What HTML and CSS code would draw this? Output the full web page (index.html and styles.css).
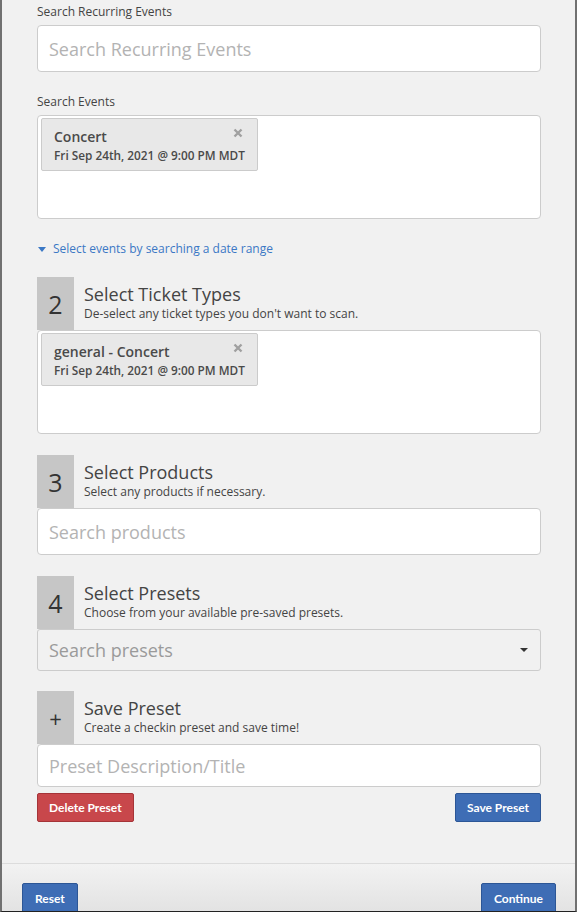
FILE: index.html
```html
<!DOCTYPE html>
<html lang="en">
<head>
    <meta charset="UTF-8">
    <meta name="viewport" content="width=device-width, initial-scale=1.0">
    <title>Check-in Setup</title>
    <link rel="stylesheet" href="styles.css">
</head>
<body>

<div class="modal">
    <div class="modal-body">

        <label class="field-label" for="recurring">Search Recurring Events</label>
        <input class="text-input" type="text" id="recurring" placeholder="Search Recurring Events">

        <label class="field-label">Search Events</label>
        <div class="chip-box">
            <div class="chip">
                <div class="chip-title">Concert</div>
                <div class="chip-date">Fri Sep 24th, 2021 @ 9:00 PM MDT</div>
                <svg class="chip-close" viewBox="0 0 10 10" width="10" height="10"><path d="M1.5 1.5 L8.5 8.5 M8.5 1.5 L1.5 8.5" stroke="#a0a0a0" stroke-width="2.4"/></svg>
            </div>
        </div>

        <a class="range-link" href="#"><span class="caret"></span>Select events by searching a date range</a>

        <div class="step">
            <div class="step-num">2</div>
            <div class="step-text">
                <div class="step-title">Select Ticket Types</div>
                <div class="step-sub">De-select any ticket types you don't want to scan.</div>
            </div>
        </div>
        <div class="chip-box">
            <div class="chip">
                <div class="chip-title">general - Concert</div>
                <div class="chip-date">Fri Sep 24th, 2021 @ 9:00 PM MDT</div>
                <svg class="chip-close" viewBox="0 0 10 10" width="10" height="10"><path d="M1.5 1.5 L8.5 8.5 M8.5 1.5 L1.5 8.5" stroke="#a0a0a0" stroke-width="2.4"/></svg>
            </div>
        </div>

        <div class="step">
            <div class="step-num">3</div>
            <div class="step-text">
                <div class="step-title">Select Products</div>
                <div class="step-sub">Select any products if necessary.</div>
            </div>
        </div>
        <input class="text-input step-input" type="text" placeholder="Search products">

        <div class="step">
            <div class="step-num">4</div>
            <div class="step-text">
                <div class="step-title">Select Presets</div>
                <div class="step-sub">Choose from your available pre-saved presets.</div>
            </div>
        </div>
        <div class="select-box">
            <span class="select-placeholder">Search presets</span>
            <span class="select-caret"></span>
        </div>

        <div class="step">
            <div class="step-num plus">+</div>
            <div class="step-text">
                <div class="step-title">Save Preset</div>
                <div class="step-sub">Create a checkin preset and save time!</div>
            </div>
        </div>
        <input class="text-input preset-input" type="text" placeholder="Preset Description/Title">

        <div class="preset-actions">
            <button class="btn btn-red" type="button">Delete Preset</button>
            <button class="btn btn-blue" type="button">Save Preset</button>
        </div>

    </div>

    <div class="modal-footer">
        <button class="btn btn-blue btn-footer" type="button">Reset</button>
        <button class="btn btn-blue btn-footer" type="button">Continue</button>
    </div>
</div>

</body>
</html>
```

FILE: styles.css
```css
body {
    margin: 0;
    font-family: "Open Sans", Arial, sans-serif;
    color: #444;
    background: #f1f1f1;
}
.modal {
    height: 912px;
    box-sizing: border-box;
    border-left: 2px solid #717171;
    border-right: 2px solid #717171;
    border-bottom: 1px solid #222;
    display: flex;
    flex-direction: column;
    overflow: hidden;
}
.modal-body {
    height: 860px;
    padding: 3px 34px 0 35px;
    flex-shrink: 0;
}
.field-label {
    display: block;
    font-size: 12px;
    line-height: 18px;
    margin-bottom: 4px;
    color: #444;
}
.text-input {
    display: block;
    width: 100%;
    box-sizing: border-box;
    height: 47px;
    padding: 0 11px;
    margin: 0 0 21px;
    border: 1px solid #cccccc;
    border-radius: 4px;
    background: #fff;
    font-family: "Open Sans", Arial, sans-serif;
    font-size: 18px;
    color: #444;
}
.text-input::placeholder {
    color: #b3b3b3;
}
.chip-box {
    height: 104px;
    box-sizing: border-box;
    border: 1px solid #cccccc;
    border-radius: 4px;
    background: #fff;
    padding: 2px 3px;
}
.chip {
    position: relative;
    width: 217px;
    height: 53px;
    box-sizing: border-box;
    background: #e8e8e8;
    border: 1px solid #cbcbcb;
    border-radius: 2px;
    padding: 8px 12px 0;
}
.chip-title {
    font-size: 14px;
    font-weight: 600;
    line-height: 19px;
    color: #4a4a4a;
}
.chip-date {
    font-size: 11.8px;
    font-weight: 600;
    line-height: 17px;
    margin-top: 1px;
    color: #4a4a4a;
    white-space: nowrap;
}
.chip-close {
    position: absolute;
    top: 9px;
    right: 14px;
}
.range-link {
    display: flex;
    align-items: center;
    margin: 21px 0 19px;
    font-size: 12px;
    line-height: 18px;
    color: #3b78c5;
    text-decoration: none;
}
.caret {
    width: 0;
    height: 0;
    border-left: 4px solid transparent;
    border-right: 4px solid transparent;
    border-top: 5px solid #3b78c5;
    margin: 0 7px 0 1px;
}
.step {
    display: flex;
    height: 53px;
    margin-top: 21px;
}
.range-link + .step {
    margin-top: 0;
}
.select-box + .step {
    margin-top: 20px;
}
.step-num {
    width: 37px;
    background: #c6c6c6;
    display: flex;
    align-items: center;
    justify-content: center;
    font-size: 25px;
    color: #333;
}
.step-num.plus {
    font-size: 22px;
    font-weight: 400;
}
.step-text {
    padding: 6px 0 0 10px;
}
.step-title {
    font-size: 18px;
    line-height: 22px;
    color: #444;
}
.step-sub {
    font-size: 12px;
    line-height: 16px;
    margin-top: 1px;
    color: #444;
}
.step-input {
    margin-bottom: 0;
}
.select-box {
    display: flex;
    align-items: center;
    justify-content: space-between;
    height: 42px;
    box-sizing: border-box;
    border: 1px solid #cccccc;
    border-radius: 3px;
    padding: 0 11px 0 11px;
    background: #f1f1f1;
}
.select-placeholder {
    font-size: 18px;
    color: #9a9a9a;
}
.select-caret {
    width: 0;
    height: 0;
    border-left: 4px solid transparent;
    border-right: 4px solid transparent;
    border-top: 4px solid #333;
    margin-right: 1px;
}
.preset-input {
    height: 43px;
    margin-bottom: 6px;
}
.preset-actions {
    display: flex;
    justify-content: space-between;
}
.btn {
    font-family: Lato, Arial, sans-serif;
    font-weight: bold;
    font-size: 12px;
    color: #fff;
    border-radius: 2px;
    cursor: pointer;
    height: 29px;
    padding: 0 11px;
}
.btn-red {
    background: #c8474b;
    border: 1px solid #a53438;
}
.btn-blue {
    background: #3e6db5;
    border: 1px solid #2c5696;
}
.modal-footer {
    flex: 1;
    border-top: 1px solid #dcdcdc;
    background: linear-gradient(#f2f2f2, #e2e2e2);
    padding: 19px 19px 0 20px;
    display: flex;
    justify-content: space-between;
    align-items: flex-start;
}
.btn-footer {
    height: 31px;
    padding: 0 12px;
}
```
